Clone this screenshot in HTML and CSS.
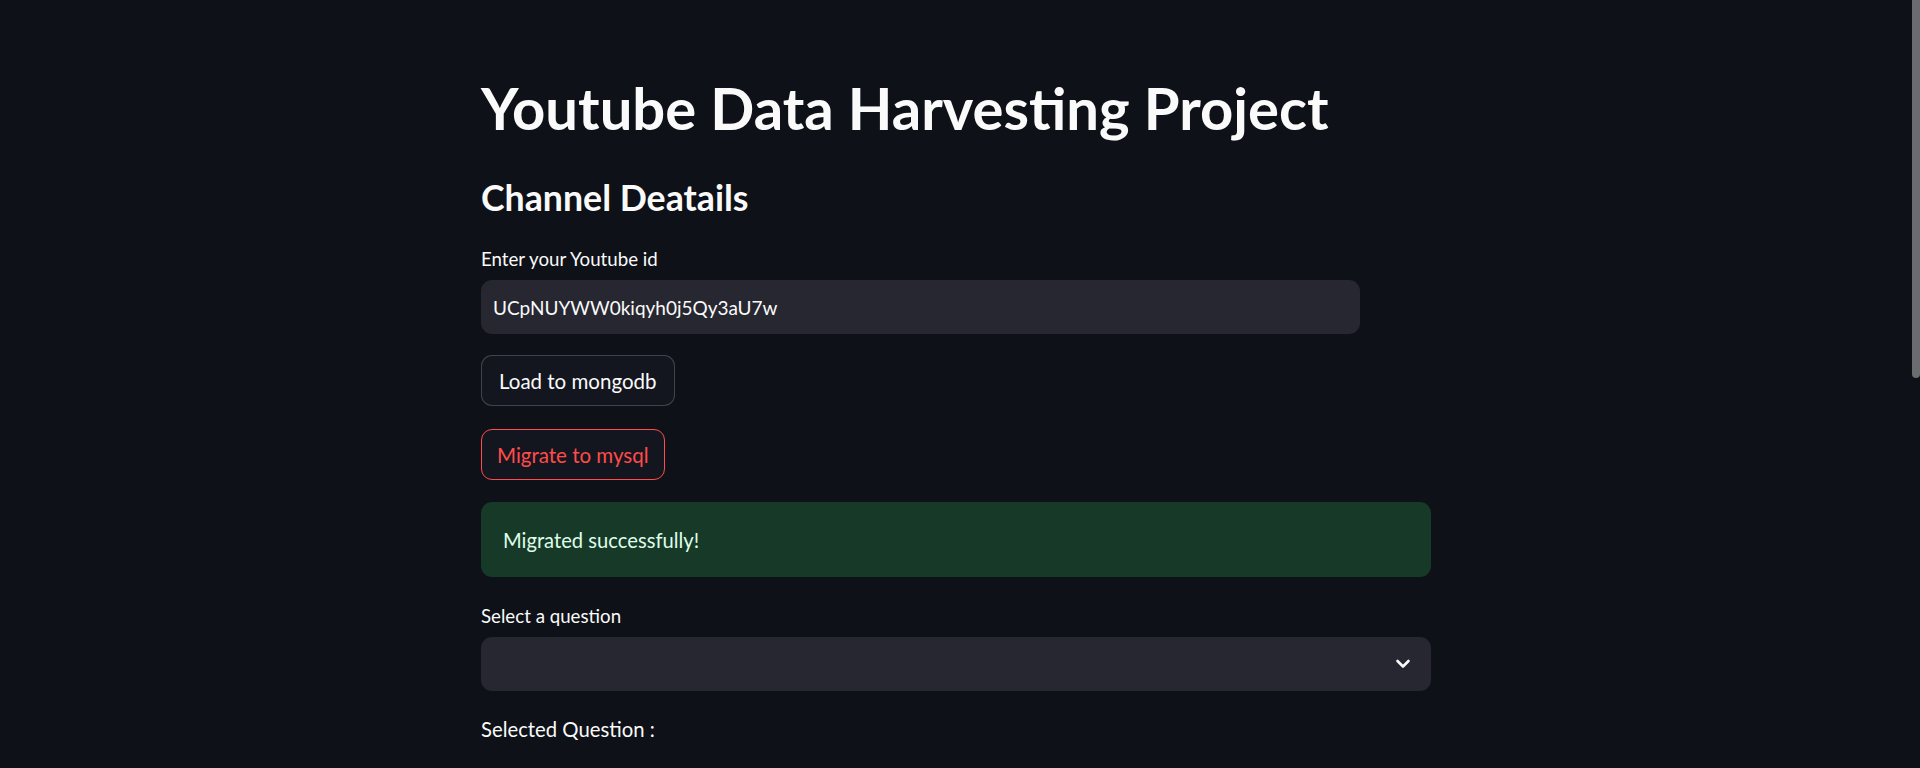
FILE: index.html
```html
<!DOCTYPE html>
<html lang="en">
<head>
<meta charset="utf-8">
<title>Youtube Data Harvesting Project</title>
<link rel="stylesheet" href="styles.css">
</head>
<body>
<div class="app">
  <main class="block">
    <h1 class="title">Youtube Data Harvesting Project</h1>
    <h3 class="subheader">Channel Deatails</h3>
    <label class="widget-label" for="yt">Enter your Youtube id</label>
    <div class="text-input"><input id="yt" type="text" value="UCpNUYWW0kiqyh0j5Qy3aU7w"></div>
    <div class="btn-row"><button class="btn">Load to mongodb</button></div>
    <div class="btn-row btn-row-2"><button class="btn btn-active">Migrate to mysql</button></div>
    <div class="alert-success">Migrated successfully!</div>
    <label class="widget-label widget-label-2">Select a question</label>
    <div class="select">
      <div class="select-value"></div>
      <svg class="chevron" width="16" height="10" viewBox="0 0 16 10"><path d="M2.5 2 L8 7.5 L13.5 2" fill="none" stroke="#fafafa" stroke-width="2.6" stroke-linecap="round" stroke-linejoin="round"/></svg>
    </div>
    <p class="markdown">Selected Question :</p>
  </main>
  <div class="scroll-thumb"></div>
</div>
</body>
</html>
```
FILE: styles.css
```css
html, body {
  margin: 0;
  padding: 0;
  background: #0e1117;
  height: 100%;
  overflow: hidden;
}
body {
  font-family: Lato, "Source Sans Pro", "Noto Sans", sans-serif;
  color: #fafafa;
}
.app {
  padding-right: 8px;
  min-height: 100%;
}
.block {
  width: 950px;
  margin: 0 auto;
  padding-top: 75px;
  display: flex;
  flex-direction: column;
  align-items: stretch;
}
.title {
  margin: 0;
  font-size: 58px;
  font-weight: 700;
  line-height: 65px;
  height: 65px;
}
.subheader {
  margin: 39px 0 0;
  font-size: 35.7px;
  font-weight: 700;
  line-height: 38px;
  height: 38px;
}
.widget-label {
  margin-top: 31px;
  font-size: 18.7px;
  line-height: 22px;
  height: 22px;
}
.widget-label-2 {
  margin-top: 28px;
}
.text-input {
  margin-top: 10px;
  width: 879px;
  height: 54px;
  background: #262730;
  border-radius: 11px;
  display: flex;
  align-items: center;
}
.text-input input {
  width: 100%;
  background: transparent;
  border: none;
  outline: none;
  color: #fafafa;
  font-family: inherit;
  font-size: 19px;
  padding: 0 12px;
}
.btn-row {
  margin-top: 21px;
  display: flex;
}
.btn-row-2 {
  margin-top: 23px;
}
.btn {
  height: 51px;
  padding: 0 17px;
  background: #13161e;
  border: 1px solid rgba(250, 250, 250, 0.2);
  border-radius: 11px;
  color: #fafafa;
  font-family: inherit;
  font-size: 20.5px;
}
.btn-active {
  border-color: #ff4b4b;
  color: #ff4b4b;
  padding: 0 15px;
}
.alert-success {
  margin-top: 22px;
  height: 75px;
  box-sizing: border-box;
  padding: 0 22px;
  display: flex;
  align-items: center;
  background: #173928;
  color: #dffde9;
  border-radius: 11px;
  font-size: 20.2px;
}
.select {
  margin-top: 10px;
  height: 54px;
  background: #262730;
  border-radius: 11px;
  display: flex;
  align-items: center;
  padding: 0 20px 0 12px;
}
.select-value {
  flex: 1;
}
.chevron {
  display: block;
}
.markdown {
  margin: 22px 0 0;
  font-size: 20.3px;
  line-height: 32px;
}
.scroll-thumb {
  position: fixed;
  top: 0;
  right: 0;
  width: 8px;
  height: 378px;
  background: #6b6c70;
  border-radius: 0 0 4px 4px;
}
```
